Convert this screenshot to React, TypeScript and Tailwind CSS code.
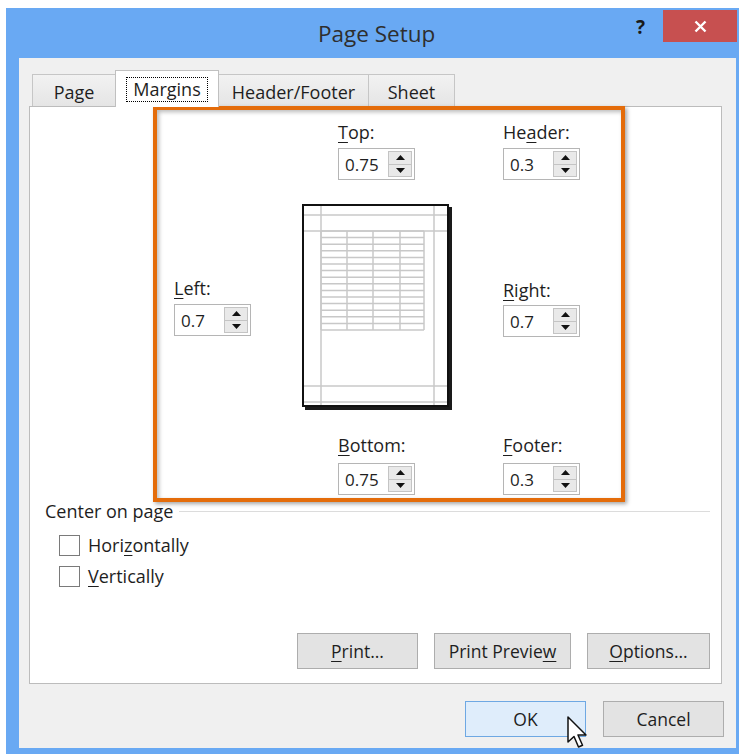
import type { ReactNode } from 'react';

const font = "font-['Open_Sans','Noto_Sans',sans-serif]";

// numeric box with the small up/down spinner on its right edge
function SpinBox({ value }: { value: string }) {
  return (
    <div className="flex h-[32px] w-[77px] items-center border border-[#b5b5b5] bg-white">
      <span className="flex-1 pl-[6px] text-[17px] leading-none text-[#1e1e1e]">{value}</span>
      <div className="mr-[2px] flex h-[26px] w-[24px] flex-col border border-[#c4c4c4] bg-[#e9e9e9]">
        <div className="flex flex-1 items-center justify-center border-b border-[#c4c4c4]">
          <svg width="9" height="5" viewBox="0 0 9 5">
            <path d="M0 5 L4.5 0 L9 5 Z" fill="#111" />
          </svg>
        </div>
        <div className="flex flex-1 items-center justify-center">
          <svg width="9" height="5" viewBox="0 0 9 5">
            <path d="M0 0 L4.5 5 L9 0 Z" fill="#111" />
          </svg>
        </div>
      </div>
    </div>
  );
}

function Field({ label, value, gap = 5 }: { label: ReactNode; value: string; gap?: number }) {
  return (
    <div className="flex flex-col">
      <span className="h-[21px] text-[18px] leading-[21px] text-[#1e1e1e]">{label}</span>
      <div className={gap === 4 ? 'mt-[4px]' : gap === 7 ? 'mt-[7px]' : 'mt-[5px]'}>
        <SpinBox value={value} />
      </div>
    </div>
  );
}

const U = ({ children }: { children: ReactNode }) => (
  <u className="decoration-1 underline-offset-[3px]">{children}</u>
);

// little sheet showing the margin guides and a sample grid
function PagePreview() {
  const rows = Array.from({ length: 16 }, (_, i) => 27 + i * 6.6);
  const cols = [19, 45, 71, 98, 122];
  return (
    <svg width="151" height="207" viewBox="0 0 151 207">
      <rect x="3" y="3" width="147" height="203" fill="#1a1a1a" />
      <rect x="1" y="1" width="145" height="201" fill="#fff" stroke="#111" strokeWidth="2" />
      <g stroke="#c8c8c8" strokeWidth="1.5">
        <line x1="19" y1="2" x2="19" y2="201" />
        <line x1="132" y1="2" x2="132" y2="201" />
        <line x1="2" y1="11" x2="145" y2="11" />
        <line x1="2" y1="27" x2="145" y2="27" />
        <line x1="2" y1="182" x2="145" y2="182" />
        <line x1="2" y1="198" x2="145" y2="198" />
        {rows.map((y) => (
          <line key={y} x1="19" y1={y} x2="122" y2={y} />
        ))}
        {cols.map((x) => (
          <line key={x} x1={x} y1="27" x2={x} y2="126" />
        ))}
      </g>
    </svg>
  );
}

function Tab({ label, active, w }: { label: string; active?: boolean; w: string }) {
  if (active) {
    return (
      <div className={`relative z-10 -mb-px -ml-px flex h-[37px] items-center justify-center border border-b-0 border-[#c0c0c0] bg-white ${w}`}>
        <span className="border border-dotted border-black px-[6px] text-[18px] leading-[23px] text-[#1e1e1e]">{label}</span>
      </div>
    );
  }
  return (
    <div className={`-ml-px flex h-[32px] items-center justify-center border border-b-0 border-[#c6c6c6] bg-gradient-to-b from-[#f2f2f2] to-[#e5e5e5] pt-[3px] text-[18px] text-[#1e1e1e] first:ml-0 ${w}`}>
      {label}
    </div>
  );
}

function Button({ children, w, primary }: { children: ReactNode; w: string; primary?: boolean }) {
  return (
    <div
      className={`flex h-[36px] items-center justify-center border text-[17.5px] text-[#1e1e1e] ${w} ${
        primary ? 'border-[#6ea8e3] bg-[#dfedfb]' : 'border-[#adadad] bg-[#e3e3e3]'
      }`}
    >
      {children}
    </div>
  );
}

function Checkbox({ children }: { children: ReactNode }) {
  return (
    <div className="flex items-center">
      <div className="h-[21px] w-[21px] border-[1.5px] border-[#7a7a7a] bg-white" />
      <span className="ml-[8px] text-[18px] leading-[21px] text-[#1e1e1e]">{children}</span>
    </div>
  );
}

export default function App() {
  return (
    <div className={`relative h-[754px] w-[739px] overflow-hidden bg-white pl-[6px] pt-[8px] ${font}`}>
      <div className="flex h-[746px] w-[733px] flex-col bg-[#69a9f3]">
        {/* title bar */}
        <div className="flex h-[50px] items-start">
          <div className="flex-1 pl-[312px] pt-[12px] text-[22.5px] leading-[28px] text-[#2e2e2e]">Page Setup</div>
          <span className="mr-[18px] mt-[7px] text-[19px] font-bold leading-[24px] text-[#1a1a1a]">?</span>
          <div className="mr-[2px] mt-[2px] flex h-[32px] w-[74px] items-center justify-center bg-[#c75050]">
            <svg width="13" height="13" viewBox="0 0 13 13">
              <path d="M1.5 1.5 L11.5 11.5 M11.5 1.5 L1.5 11.5" stroke="#fff" strokeWidth="2.4" />
            </svg>
          </div>
        </div>

        {/* client area */}
        <div className="mb-[6px] ml-[13px] mr-[3px] flex flex-1 flex-col bg-[#f0f0f0]">
          <div className="ml-[13px] mt-[12px] flex h-[36px] items-end">
            <Tab label="Page" w="w-[84px]" />
            <Tab label="Margins" active w="w-[104px]" />
            <Tab label="Header/Footer" w="w-[151px]" />
            <Tab label="Sheet" w="w-[87px]" />
          </div>

          <div className="ml-[10px] mr-[14px] flex h-[578px] flex-col border border-[#bcbcbc] bg-white">
            {/* margin settings */}
            <div className="-mt-px ml-[123px] flex h-[396px] w-[472px] border-4 border-[#e46c0a] shadow-[2px_2px_4px_rgba(0,0,0,0.35),inset_2px_2px_4px_rgba(0,0,0,0.28)]">
              <div className="w-[145px] pl-[17px] pt-[168px]">
                <Field label={<><U>L</U>eft:</>} value="0.7" />
              </div>
              <div className="flex w-[201px] flex-col pt-[12px]">
                <div className="ml-[36px]">
                  <Field label={<><U>T</U>op:</>} value="0.75" />
                </div>
                <div className="mt-[24px]">
                  <PagePreview />
                </div>
                <div className="ml-[36px] mt-[24px]">
                  <Field label={<><U>B</U>ottom:</>} value="0.75" gap={7} />
                </div>
              </div>
              <div className="flex flex-col pt-[12px]">
                <Field label={<>He<U>a</U>der:</>} value="0.3" />
                <div className="mt-[100px]">
                  <Field label={<><U>R</U>ight:</>} value="0.7" gap={4} />
                </div>
                <div className="mt-[98px]">
                  <Field label={<><U>F</U>ooter:</>} value="0.3" gap={7} />
                </div>
              </div>
            </div>

            {/* centering options */}
            <div className="-mt-[1px] flex h-[21px] items-center pl-[15px]">
              <span className="text-[18px] leading-[21px] text-[#1e1e1e]">Center on page</span>
              <div className="ml-[6px] mr-[11px] h-px flex-1 bg-[#dcdcdc]" />
            </div>
            <div className="ml-[29px] mt-[13px] flex flex-col gap-[10px]">
              <Checkbox>Hori<U>z</U>ontally</Checkbox>
              <Checkbox><U>V</U>ertically</Checkbox>
            </div>

            <div className="mb-[14px] mr-[11px] mt-auto flex justify-end gap-[16px]">
              <Button w="w-[121px]"><U>P</U>rint...</Button>
              <Button w="w-[137px]">Print Previe<U>w</U></Button>
              <Button w="w-[123px]"><U>O</U>ptions...</Button>
            </div>
          </div>

          <div className="mr-[12px] mt-[17px] flex justify-end gap-[17px]">
            <Button w="w-[121px]" primary>OK</Button>
            <Button w="w-[121px]">Cancel</Button>
          </div>
        </div>
      </div>

      {/* mouse pointer resting on OK */}
      <svg className="absolute left-[567px] top-[716px]" width="22" height="33" viewBox="0 0 22 33">
        <path
          d="M1 1 L1 26 L7 20.5 L11.5 31 L15.5 29.3 L11 19 L19 19 Z"
          fill="#fff"
          stroke="#111"
          strokeWidth="1.5"
          strokeLinejoin="round"
        />
      </svg>
    </div>
  );
}
